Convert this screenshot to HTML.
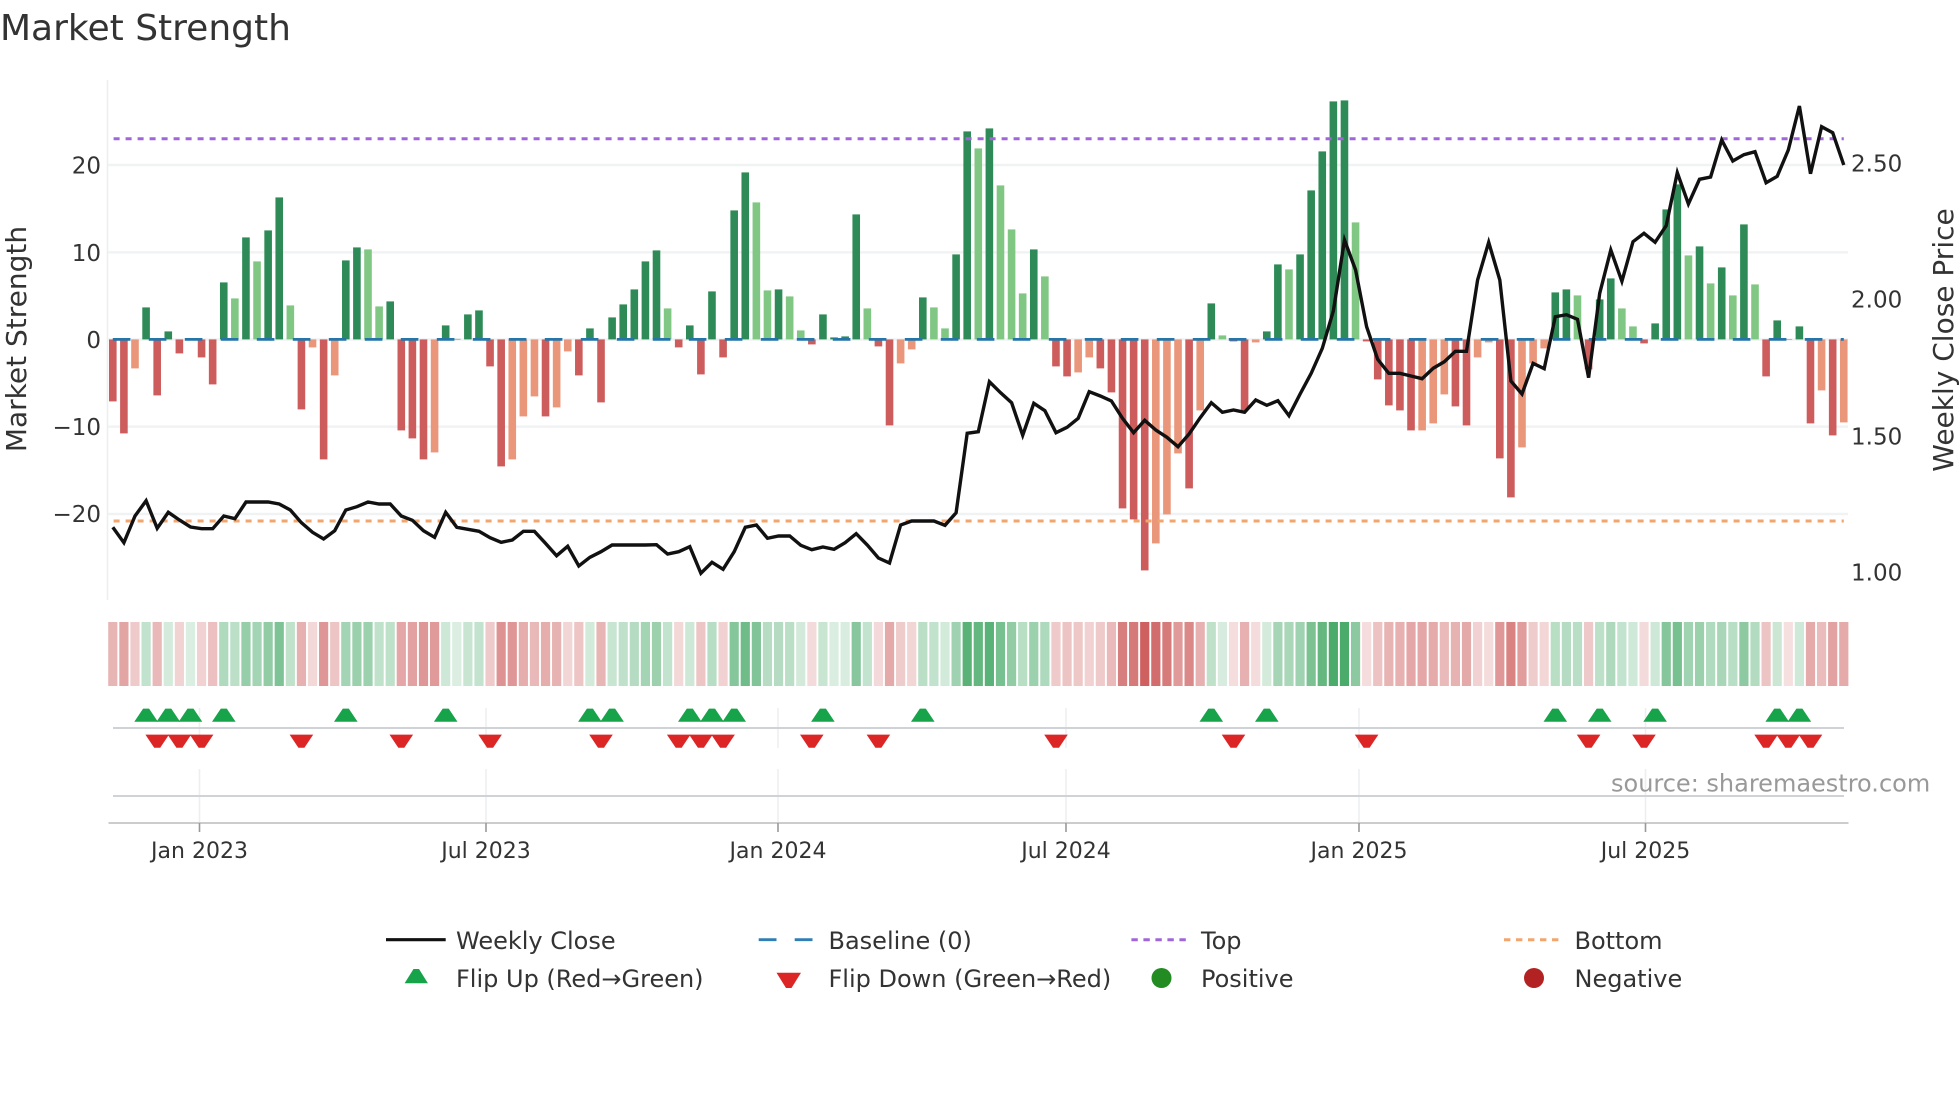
<!DOCTYPE html>
<html lang="en">
<head>
<meta charset="utf-8">
<title>Market Strength</title>
<style>
html,body{margin:0;padding:0;background:#fff;width:1960px;height:1102px;overflow:hidden}
svg{display:block}
text{font-family:"DejaVu Sans","Liberation Sans",sans-serif;fill:#333}
</style>
</head>
<body>
<svg id="c" xmlns="http://www.w3.org/2000/svg" width="1960" height="1102" viewBox="0 0 1960 1102">
<rect width="1960" height="1102" fill="#fff"/>
<g stroke="#f0f2f4" stroke-width="2.4" fill="none">
<path d="M107 165H1848M107 252.3H1848M107 339.5H1848M107 426.7H1848M107 514H1848"/>
</g>
<path d="M107.5 80V600" stroke="#eceef0" stroke-width="1.6" fill="none"/>
<g id="bars"></g>
<path d="M112.8 339.4H1843.8" stroke="#2475aa" stroke-width="2.8" stroke-dasharray="17.6 18.4" fill="none"/>
<path d="M113.6 138.7H1843.8" stroke="#a066d9" stroke-width="3" stroke-dasharray="6 6" fill="none"/>
<path d="M113.6 521H1843.8" stroke="#f2a66e" stroke-width="3" stroke-dasharray="6 6" fill="none"/>
<path id="close" fill="none" stroke="#111" stroke-width="3.4" stroke-linejoin="miter"/>
<g id="heat"></g>
<g stroke="#eceef0" stroke-width="1.5" fill="none">
<path d="M199.5 708V748M486 708V748M778 708V748M1066 708V748M1359 708V748M1645.5 708V748M199.5 769V823M486 769V823M778 769V823M1066 769V823M1359 769V823M1645.5 769V823"/>
</g>
<path d="M113 728H1844M113 796H1844" stroke="#cfd2d6" stroke-width="2" fill="none"/>
<path d="M108.5 823H1848.5" stroke="#cccccc" stroke-width="2" fill="none"/>
<path d="M199.5 823V832M486 823V832M778 823V832M1066 823V832M1359 823V832M1645.5 823V832" stroke="#999" stroke-width="1.6" fill="none"/>
<g id="flips"></g>

<text x="0" y="40" font-size="36">Market Strength</text>

<g font-size="23" text-anchor="end">
<text x="101" y="173.4">20</text>
<text x="101" y="260.8">10</text>
<text x="101" y="347.8">0</text>
<text x="101" y="434.8">−10</text>
<text x="101" y="521.8">−20</text>
</g>
<g font-size="23">
<text x="1851" y="171.5">2.50</text>
<text x="1851" y="307.5">2.00</text>
<text x="1851" y="444.7">1.50</text>
<text x="1851" y="580.7">1.00</text>
</g>
<text transform="translate(26 339) rotate(-90)" font-size="28" text-anchor="middle">Market Strength</text>
<text transform="translate(1953 340) rotate(-90)" font-size="28" text-anchor="middle">Weekly Close Price</text>

<g font-size="22" text-anchor="middle">
<text x="199.5" y="858">Jan 2023</text>
<text x="486" y="858">Jul 2023</text>
<text x="778" y="858">Jan 2024</text>
<text x="1066" y="858">Jul 2024</text>
<text x="1359" y="858">Jan 2025</text>
<text x="1645.5" y="858">Jul 2025</text>
</g>
<text x="1611" y="791.7" font-size="24" style="fill:#999">source: sharemaestro.com</text>

<path d="M386 939.7H445.7" stroke="#111" stroke-width="3.2" fill="none"/>
<path d="M758.7 939.7H812.7" stroke="#2f7fb5" stroke-width="2.8" stroke-dasharray="17.8 18.2" fill="none"/>
<path d="M1131.4 939.7H1186" stroke="#a066d9" stroke-width="3" stroke-dasharray="6.4 5.6" fill="none"/>
<path d="M1504 939.7H1558.7" stroke="#f2a66e" stroke-width="3" stroke-dasharray="6.4 5.6" fill="none"/>
<polygon points="404.6,983.3 413.5,969 419,969 427.9,983.3" fill="#16a34a"/>
<polygon points="776.5,972.7 801,972.7 791.5,988 786,988" fill="#dc2626"/>
<circle cx="1161.5" cy="978" r="10" fill="#228b22"/>
<circle cx="1534" cy="978" r="10" fill="#b22222"/>
<g font-size="24">
<text x="456" y="948.8">Weekly Close</text>
<text x="828.5" y="948.8">Baseline (0)</text>
<text x="1201" y="948.8">Top</text>
<text x="1574.5" y="948.8">Bottom</text>
<text x="456" y="987.2">Flip Up (Red→Green)</text>
<text x="828.5" y="987.2">Flip Down (Green→Red)</text>
<text x="1201" y="987.2">Positive</text>
<text x="1574.5" y="987.2">Negative</text>
</g>
</svg>
<script>
(function(){
var NS="http://www.w3.org/2000/svg",X0=112.8,P=11.096,Z=339.4;
var V="-62 -94 -29l 32 -56 8 -14 1 -18 -45 57 41l 102 78l 109 142 34l -70 -8l -120 -36l 79 92 90l 33l 38 -91 -99 -120 -113l 14 .5 25 29 -27 -127 -120l -77l -57l -77 -68l -12l -36 11 -63 22 35 50 78 89 31l -8 14 -35 48 -18 129 167 137l 49l 50 43l 9l -5 25 2 3 125 31l -7 -86 -24l -10l 42 32l 11l 85 208 191l 211 154l 110l 46l 90 63l -27 -37 -33l -18l -29 -53 -169 -180 -231 -204l -175l -114l -149 -71l 36 4l -2 -71 -3l 8 75 70l 85 149 188 238 239 117l -2 -40 -66 -71 -91 -91l -84l -55l -67 -86 -18l -3l -119 -158 -108l -24l -9l 47 50 44l -30 40 61 31l 13l -4 16 130 155 84l 93 56l 72 44l 115 55l -37 19 -.5 13 -84 -51l -96 -83l".split(" ");
var L=[527.3,542.7,516,500.7,528.3,512.3,520,527,528.7,528.7,516,518.7,502,502,502,504,510,522.7,532.3,539,530.7,510,506.7,502,504,504,516,520.3,530.7,537.3,512.3,527.3,529.3,531.3,537.7,542.3,540,531.3,531.3,543.3,555.7,546.3,566,557.3,551.7,545,545,545,545,544.7,554,551.7,546.7,573.3,562.3,569.3,551.7,527.3,525,538.3,536,536,545.3,549.7,547,549.3,542.7,533.7,545,558,563,525,521,521,521,525.3,512.7,433.3,431.7,381.7,392.7,402.7,435.3,403.3,410.7,432.7,427.3,418.3,391.7,396,401,418.3,432.7,420.3,430,437.3,446.7,434,417.7,402.7,412.3,410,412.3,400,405.3,400.7,415.7,394,373.3,348.3,310.7,240,270,326.7,359.3,373.3,373.3,376,378.7,368.3,361.7,351.3,351.3,280,242.3,280,381,394,363.3,368.7,316.7,314.7,319.3,377.7,293.3,250,281.3,241.7,233.3,242.3,225.7,172.7,204,179.3,177,140,161,154.7,151.7,182.7,176.3,150,106,173.7,126.7,132.7,165];
var UP=[3,5,7,10,21,30,43,45,52,54,56,64,73,99,104,130,134,139,150,152];
var DN=[4,6,8,17,26,34,44,51,53,55,63,69,85,101,113,133,138,149,151,153];
function cx(i){return X0+P*i}
var bars=document.getElementById("bars"),heat=document.getElementById("heat"),flips=document.getElementById("flips");
function rect(p,x,y,w,h,f,o){var r=document.createElementNS(NS,"rect");r.setAttribute("x",x.toFixed(2));r.setAttribute("y",y.toFixed(2));r.setAttribute("width",w);r.setAttribute("height",h.toFixed(2));r.setAttribute("fill",f);if(o!==undefined)r.setAttribute("fill-opacity",o.toFixed(3));p.appendChild(r)}
V.forEach(function(s,i){
 var light=s.slice(-1)==="l",v=parseFloat(s),a=Math.abs(v),pos=v>0;
 var col=pos?(light?"#81c784":"#2e8b57"):(light?"#e9967a":"#cd5c5c");
 rect(bars,cx(i)-3.8,pos?Z-a:Z,7.6,a,col);
 var al=.14+.58*Math.pow(Math.min(a,240)/240,.85);
 if(pos)al=Math.min(.88,al*1.12);
 rect(heat,cx(i)-4.6,622,9.2,64,pos?"rgb(30,150,70)":"rgb(185,28,28)",al);
});
document.getElementById("close").setAttribute("d","M"+L.map(function(y,i){return cx(i).toFixed(1)+" "+y}).join("L"));
function poly(pts,f){var g=document.createElementNS(NS,"polygon");g.setAttribute("points",pts);g.setAttribute("fill",f);flips.appendChild(g)}
UP.forEach(function(i){var c=cx(i);poly([c-11.8,721.7,c-3,708.6,c+3,708.6,c+11.8,721.7].map(function(n){return n.toFixed(1)}).join(" "),"#16a34a")});
DN.forEach(function(i){var c=cx(i);poly([c-11.8,734.6,c+11.8,734.6,c+3,747.8,c-3,747.8].map(function(n){return n.toFixed(1)}).join(" "),"#dc2626")});
})();
</script>
</body>
</html>
